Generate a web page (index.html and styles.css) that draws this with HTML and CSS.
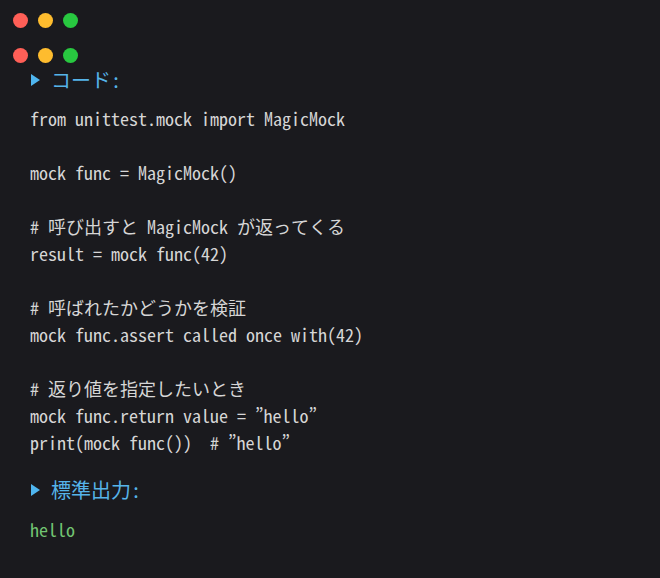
FILE: index.html
```html
<!DOCTYPE html>
<html lang="ja">
<head>
<meta charset="utf-8">
<link rel="stylesheet" href="styles.css">
</head>
<body>
<div class="dots"><span class="dot red"></span><span class="dot yellow"></span><span class="dot green"></span></div>
<div class="dots second"><span class="dot red"></span><span class="dot yellow"></span><span class="dot green"></span></div>
<main class="content">
  <h2 class="section-title"><span class="tri"></span>コード:</h2>
  <pre class="code">from unittest.mock import MagicMock

mock func = MagicMock()

# 呼び出すと MagicMock が返ってくる
result = mock func(42)

# 呼ばれたかどうかを検証
mock func.assert called once with(42)

# 返り値を指定したいとき
mock func.return value = ”hello”
print(mock func())  # ”hello”</pre>
  <h2 class="section-title second"><span class="tri"></span>標準出力:</h2>
  <pre class="output">hello</pre>
</main>
</body>
</html>
```
FILE: styles.css
```css
html, body {
  margin: 0;
  padding: 0;
  background: #1a1a1e;
  height: 100%;
}
body {
  font-family: "Noto Sans Mono CJK JP", "Liberation Mono", "Noto Sans CJK JP", monospace;
}
.dots {
  display: flex;
  gap: 10px;
  padding-left: 13px;
  margin-top: 13px;
}
.dots.second {
  margin-top: 20px;
}
.dot {
  width: 15px;
  height: 15px;
  border-radius: 50%;
  display: block;
}
.red { background: #ff5f57; }
.yellow { background: #febc2e; }
.green { background: #28c840; }
.content {
  padding-left: 30px;
}
.section-title {
  margin: 0;
  font-weight: normal;
  font-size: 20px;
  line-height: 34px;
  height: 34px;
  color: #56b4e9;
  display: flex;
  align-items: center;
  font-family: "Noto Sans Mono CJK JP", "Noto Sans CJK JP", sans-serif;
}
.section-title.second {
  margin-top: 17px;
}
.tri {
  width: 0;
  height: 0;
  border-top: 6px solid transparent;
  border-bottom: 6px solid transparent;
  border-left: 9px solid #4fb6f0;
  margin-left: 1px;
  margin-right: 11px;
}
.code, .output {
  margin: 8px 0 0;
  font-family: inherit;
  font-size: 18px;
  line-height: 27px;
  color: #d6d6d6;
}
.output {
  margin-top: 9px;
  color: #72c472;
}
```
